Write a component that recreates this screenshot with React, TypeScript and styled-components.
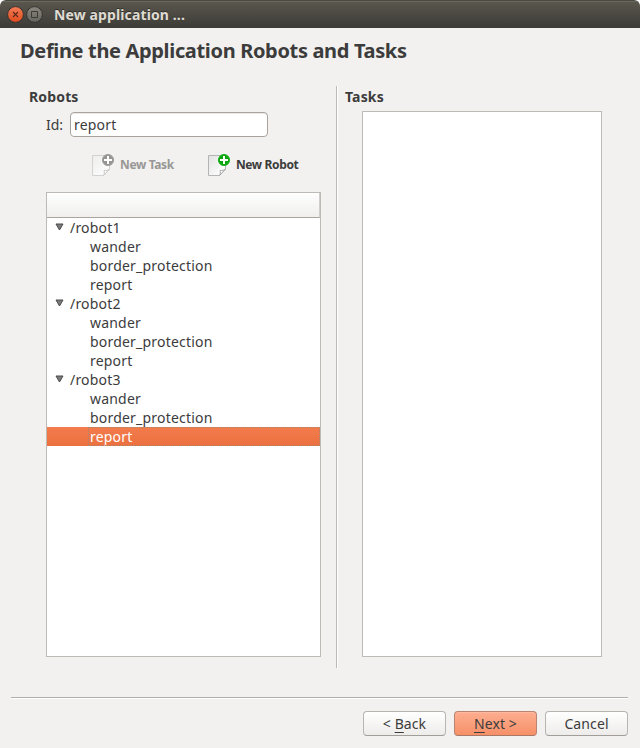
import React from "react";
import styled, { createGlobalStyle, css } from "styled-components";

const GlobalStyle = createGlobalStyle`
  * { box-sizing: border-box; }
  body { margin: 0; background: #fff; overflow: hidden; }
  button, input { font: inherit; }
`;

const Window = styled.div`
  width: 640px;
  height: 748px;
  display: flex;
  flex-direction: column;
  background: #f2f1f0;
  border-radius: 6px 6px 0 0;
  overflow: hidden;
  color: #3c3c3c;
  font: 14px/19px "Noto Sans", sans-serif;
`;

const TitleBar = styled.header`
  height: 28px;
  flex: none;
  display: flex;
  align-items: center;
  gap: 2px;
  padding: 0 0 0 7px;
  background: linear-gradient(#5a574e, #3c3b37);
  border-top: 1px solid #4b4943;
  box-shadow: inset 0 1px #6a675d;
`;

const TitleIcon = styled.svg`
  width: 17px;
  height: 17px;
  flex: none;
`;

const WindowTitle = styled.div`
  margin-left: 9px;
  color: #dfdbd2;
  font-weight: 700;
  font-size: 14px;
  letter-spacing: 0.12px;
  text-shadow: 0 -1px #2e2d29;
`;

const Heading = styled.h1`
  flex: none;
  height: 58px;
  margin: 0;
  padding: 10px 0 0 20px;
  font-size: 20px;
  line-height: 25px;
  font-weight: 700;
  letter-spacing: -0.34px;
`;

const Panels = styled.main`
  display: flex;
  height: 582px;
  flex: none;
`;

const RobotsPanel = styled.section`
  width: 337px;
  border-right: 1px solid #bcb8b4;
  padding-right: 15px;
`;

const TasksPanel = styled.section`
  flex: 1;
  box-shadow: inset 1px 0 #fff;
  padding-right: 38px;
`;

const PanelTitle = styled.h2<{ $left: number; $height: number }>`
  height: ${(p) => p.$height}px;
  margin: 0;
  padding: 1px 0 0 ${(p) => p.$left}px;
  font-size: 14px;
  line-height: 19px;
  font-weight: 700;
  letter-spacing: 0.15px;
`;

const Field = styled.label`
  display: flex;
  align-items: center;
  height: 25px;
  padding-left: 46px;
`;

const FieldName = styled.span`
  width: 24px;
`;

const Input = styled.input`
  width: 198px;
  height: 25px;
  padding: 0 3px 1px;
  color: #3c3c3c;
  letter-spacing: 0.2px;
  background: #fff;
  border: 1px solid #aaa39d;
  border-radius: 4px;
  box-shadow: inset 0 1px #eceae8;
  outline: none;
`;

const Toolbar = styled.div`
  display: flex;
  height: 55px;
  padding: 14px 0 0 91px;
  gap: 33px;
`;

const ToolButton = styled.button`
  display: flex;
  align-items: center;
  gap: 5px;
  height: 26px;
  padding: 0;
  border: 0;
  background: none;
  color: #3c3c3c;
  font-size: 12px;
  font-weight: 700;
  letter-spacing: -0.35px;
  &:disabled { color: #989795; }
`;

const ToolIcon = styled.svg`
  width: 24px;
  height: 24px;
`;

const Box = styled.div<{ $left: number; $height: number }>`
  height: ${(p) => p.$height}px;
  margin-left: ${(p) => p.$left}px;
  background: #fff;
  border: 1px solid #bdb9b5;
`;

const RobotTree = styled(Box)`
  width: 275px;
`;

const TreeHeader = styled.div`
  height: 25px;
  background: linear-gradient(#fefefe, #f0efee);
  border-bottom: 1px solid #aaa49e;
  border-right: 1px solid #d0cdca;
`;

const TreeRow = styled.div<{ $child?: boolean; $selected?: boolean }>`
  display: flex;
  align-items: center;
  height: 19px;
  padding-left: ${(p) => (p.$child ? 41 : 8)}px;
  ${(p) =>
    p.$selected &&
    css`
      color: #fff;
      background: linear-gradient(#f37c4c, #ec7040);
    `}
`;

const RowLabel = styled.span<{ $selected?: boolean }>`
  flex: 1;
  height: 19px;
  line-height: 20px;
  padding-left: 2px;
  letter-spacing: 0.2px;
  outline: ${(p) => (p.$selected ? "1px dotted #a7876f" : "none")};
  outline-offset: -1px;
`;

const Arrow = styled.svg`
  width: 9px;
  height: 9px;
  margin: -2px 4px 0 0;
`;

const Footer = styled.footer`
  margin: 29px 12px 0 11px;
  padding-top: 13px;
  border-top: 1px solid #b2afab;
  box-shadow: inset 0 1px #fff;
  display: flex;
  justify-content: flex-end;
  gap: 8px;
`;

const Button = styled.button<{ $primary?: boolean }>`
  width: 83px;
  height: 25px;
  padding: 0;
  color: #3c3c3c;
  letter-spacing: 0.1px;
  border: 1px solid ${(p) => (p.$primary ? "#b98572" : "#b8b4b0")};
  border-bottom-color: ${(p) => (p.$primary ? "#a97864" : "#a19d99")};
  border-radius: 4px;
  background: ${(p) =>
    p.$primary
      ? "linear-gradient(#fdae90, #f69068)"
      : "linear-gradient(#fff, #edecea)"};
  box-shadow: inset 0 1px ${(p) => (p.$primary ? "#ffb99f" : "#fff")};
`;

const Mnemonic = styled.span`
  text-decoration: underline;
  text-decoration-thickness: 1px;
  text-underline-offset: 3px;
`;

function CloseIcon() {
  return (
    <TitleIcon viewBox="0 0 17 17">
      <defs>
        <linearGradient id="close" x2="0" y2="1">
          <stop stopColor="#f47c57" />
          <stop offset="1" stopColor="#df4b1c" />
        </linearGradient>
      </defs>
      <circle cx="8.5" cy="8.5" r="7.9" fill="url(#close)" stroke="#35332f" />
      <path d="m6 6 5 5m0-5-5 5" stroke="#5a2818" strokeWidth="1.1" />
    </TitleIcon>
  );
}

function MaximizeIcon() {
  return (
    <TitleIcon viewBox="0 0 17 17">
      <defs>
        <linearGradient id="max" x2="0" y2="1">
          <stop stopColor="#8a877e" />
          <stop offset="1" stopColor="#65635c" />
        </linearGradient>
      </defs>
      <circle cx="8.5" cy="8.5" r="7.9" fill="url(#max)" stroke="#35332f" />
      <path d="M5.5 5.5h6v6h-6z" fill="none" stroke="#3c3b37" />
    </TitleIcon>
  );
}

function NewPageIcon({ muted }: { muted?: boolean }) {
  const id = muted ? "page-muted" : "page";
  return (
    <ToolIcon viewBox="0 0 24 24">
      <defs>
        <linearGradient id={id} x2="1" y2="1">
          <stop stopColor={muted ? "#eeedec" : "#e2e2e2"} />
          <stop offset=".8" stopColor="#fcfcfc" />
        </linearGradient>
      </defs>
      <path
        d="M1.5 3.5h17v13.5l-6 6.5h-11z"
        fill={`url(#${id})`}
        stroke={muted ? "#d3d2d1" : "#b3b4b4"}
      />
      <path
        d="M12.5 23.5c1-1.5 1-3.5.5-5 2 .3 4-.2 5.5-1.5z"
        fill="#fff"
        stroke={muted ? "#c8c7c6" : "#a6a8a7"}
      />
      <circle
        cx="17"
        cy="8"
        r="5.6"
        fill={muted ? "#969594" : "#0aa70a"}
        stroke={muted ? "#a3a2a1" : "#25b525"}
      />
      <path d="M17 4v8m-4-4h8" stroke="#fff" strokeWidth="2" />
    </ToolIcon>
  );
}

const robots = ["/robot1", "/robot2", "/robot3"];
const tasks = ["wander", "border_protection", "report"];

export default function App() {
  return (
    <>
      <GlobalStyle />
      <Window>
        <TitleBar>
          <CloseIcon />
          <MaximizeIcon />
          <WindowTitle>New application ...</WindowTitle>
        </TitleBar>
        <Heading>Define the Application Robots and Tasks</Heading>
        <Panels>
          <RobotsPanel>
            <PanelTitle $left={29} $height={26}>Robots</PanelTitle>
            <Field>
              <FieldName>Id:</FieldName>
              <Input defaultValue="report" />
            </Field>
            <Toolbar>
              <ToolButton disabled>
                <NewPageIcon muted />
                New Task
              </ToolButton>
              <ToolButton>
                <NewPageIcon />
                New Robot
              </ToolButton>
            </Toolbar>
            <RobotTree $left={46} $height={465}>
              <TreeHeader />
              {robots.map((robot, i) => (
                <React.Fragment key={robot}>
                  <TreeRow>
                    <Arrow viewBox="0 0 9 9">
                      <path d="M1 2h7L4.5 8z" fill="#7b7b7b" stroke="#4b4b4b" />
                    </Arrow>
                    <RowLabel>{robot}</RowLabel>
                  </TreeRow>
                  {tasks.map((task, j) => {
                    const selected = i === 2 && j === 2;
                    return (
                      <TreeRow key={task} $child $selected={selected}>
                        <RowLabel $selected={selected}>{task}</RowLabel>
                      </TreeRow>
                    );
                  })}
                </React.Fragment>
              ))}
            </RobotTree>
          </RobotsPanel>
          <TasksPanel>
            <PanelTitle $left={8} $height={25}>Tasks</PanelTitle>
            <Box $left={25} $height={546} />
          </TasksPanel>
        </Panels>
        <Footer>
          <Button>&lt; <Mnemonic>B</Mnemonic>ack</Button>
          <Button $primary><Mnemonic>N</Mnemonic>ext &gt;</Button>
          <Button>Cancel</Button>
        </Footer>
      </Window>
    </>
  );
}
